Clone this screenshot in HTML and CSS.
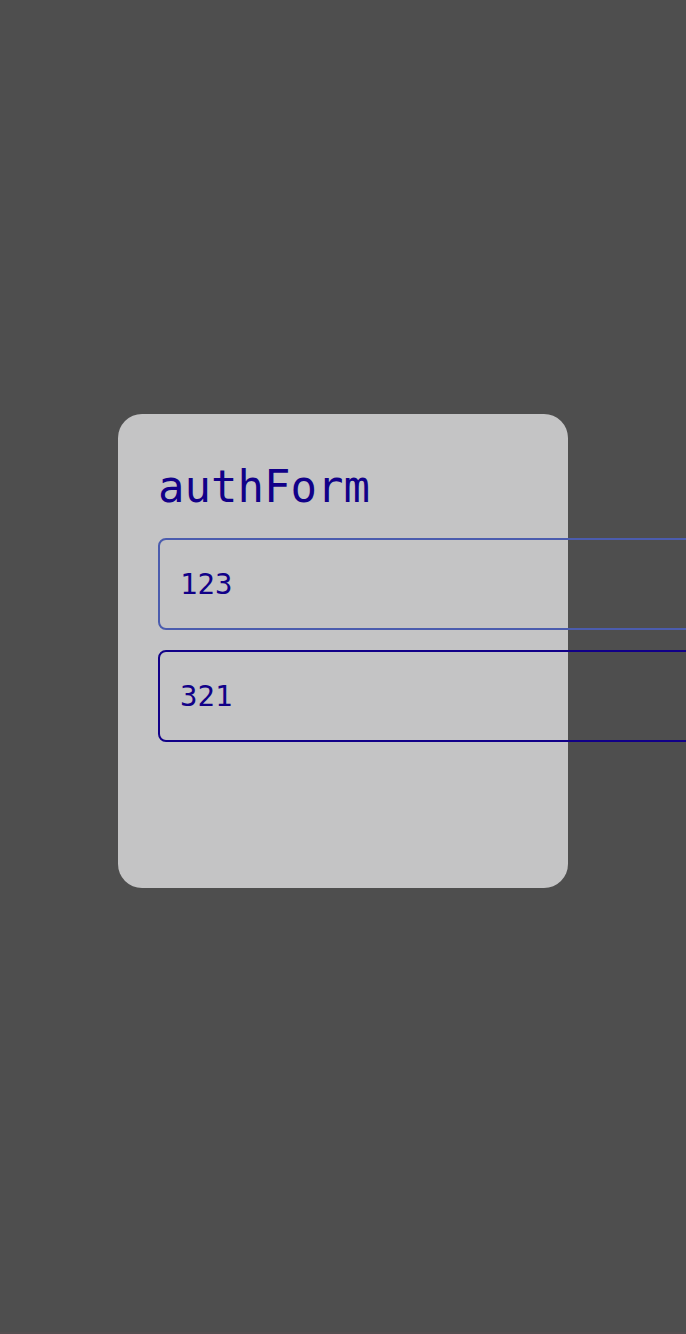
FILE: index.html
```html
<!DOCTYPE html>
<html lang="en">
<head>
<meta charset="utf-8">
<meta name="viewport" content="width=device-width, initial-scale=1">
<title>authForm</title>
<link rel="stylesheet" href="styles.css">
</head>
<body>
<main class="page">
  <form class="card">
    <h1 class="title">authForm</h1>
    <input class="field field-login" type="text" name="login" aria-label="Login" value="123">
    <input class="field" type="text" name="password" aria-label="Password" value="321">
  </form>
</main>
</body>
</html>
```

FILE: styles.css
```css
* {
  box-sizing: border-box;
}

body {
  margin: 0;
  overflow: hidden;
  background: #4e4e4e;
  color: #110088;
  font-family: Consolas, "DejaVu Sans Mono", monospace;
}

.page {
  display: flex;
  align-items: center;
  justify-content: center;
  min-height: 100vh;
  padding: 0 16px 30px;
  border-bottom: 2px solid #544e50;
}

.card {
  display: flex;
  flex-direction: column;
  gap: 20px;
  width: 100%;
  max-width: 450px;
  min-height: 474px;
  padding: 40px;
  border-radius: 24px;
  background: #c4c4c5;
}

.title {
  margin: 0;
  padding-top: 2px;
  font-size: 44px;
  font-weight: 400;
  line-height: 62px;
}

.field {
  width: 160%;
  height: 92px;
  padding: 0 20px;
  border: 2px solid #110088;
  border-radius: 8px;
  outline: none;
  background: transparent;
  color: inherit;
  font: inherit;
  font-size: 29px;
}

.field-login {
  border-color: #4b5cae;
}
```
